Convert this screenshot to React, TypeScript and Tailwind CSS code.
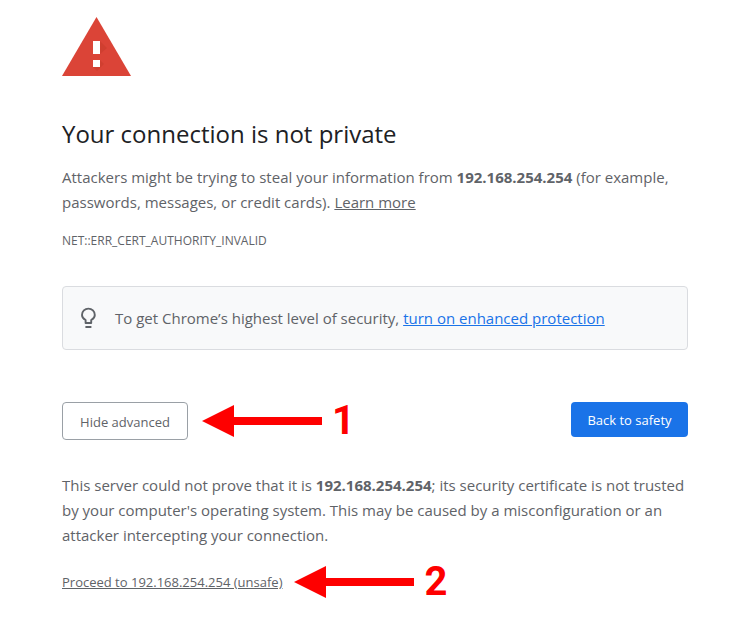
import React from "react";

function Arrow() {
  return (
    <svg className="h-8 w-[120px] shrink-0" viewBox="0 0 120 32" aria-hidden="true">
      <path d="M0 16 32 0v12h88v8H32v12z" fill="#fe0000" />
    </svg>
  );
}

function Step({ n }: { n: string }) {
  return (
    <span className="flex items-center gap-2.5">
      <Arrow />
      <span className="font-[Roboto,sans-serif] text-[40px] leading-8 font-bold text-[#fe0000]">{n}</span>
    </span>
  );
}

function Bulb() {
  return (
    <svg className="h-[22px] w-5 shrink-0" viewBox="0 0 20 22" fill="none" stroke="#5f6368" strokeWidth="1.9" aria-hidden="true">
      <path d="M6.600 16v-3C4.200 11.700 3 9.900 3 7.900a6.400 6.300 0 0 1 12.800 0c0 2-1.200 3.800-3.600 5.100v3z" strokeLinejoin="round" />
      <path d="M6.400 20h6" strokeWidth="2" />
    </svg>
  );
}

export default function App() {
  return (
    <main className="mx-auto max-w-[626px] bg-white pt-[17px] font-['Open_Sans','Noto_Sans',sans-serif] text-[15px] leading-[25px] text-[#5f6368]">
      <svg className="h-[59px] w-[69px]" viewBox="0 0 69 59" role="img" aria-label="Warning">
        <path d="M34.500 0 69 59H0z" fill="#db4437" />
        <path d="m38 24 7 7-7 6zM31 50l4 4 7-7-4-4z" fill="#c53929" fillOpacity=".5" />
        <path d="M31 24h7v13h-7zM31 43h7v7h-7z" fill="#fff" />
      </svg>
      <h1 className="mt-10 text-2xl leading-9 text-[#202124]">Your connection is not private</h1>
      <p className="mt-[13px]">
        Attackers might be trying to steal your information from <strong>192.168.254.254</strong> (for example, passwords, messages, or credit cards).{" "}
        <a href="#learn" className="underline">Learn more</a>
      </p>
      <p className="mt-[13px] text-xs leading-[25px]">NET::ERR_CERT_AUTHORITY_INVALID</p>
      <section className="mt-[33px] flex h-16 items-center gap-4 rounded border border-[#dadce0] bg-[#f8f9fa] px-4">
        <Bulb />
        <p>To get Chrome’s highest level of security, <a href="#protection" className="text-[#1a73e8] underline">turn on enhanced protection</a></p>
      </section>
      <div className="mt-[52px] flex items-start justify-between">
        <div className="flex items-center gap-3.5">
          <button type="button" className="h-[38px] w-[126px] rounded border border-[#9aa0a6] pt-0.5 text-[13px]">Hide advanced</button>
          <Step n="1" />
        </div>
        <button type="button" className="h-[35px] w-[117px] rounded bg-[#1a73e8] pt-0.5 text-[13px] text-white">Back to safety</button>
      </div>
      <p className="mt-[33px]">
        This server could not prove that it is <strong>192.168.254.254</strong>; its security certificate is not trusted by your computer's operating system. This may be caused by a misconfiguration or an attacker intercepting your connection.
      </p>
      <div className="mt-[18px] flex items-center gap-3">
        <a href="#proceed" className="text-[13px] underline">Proceed to 192.168.254.254 (unsafe)</a>
        <Step n="2" />
      </div>
    </main>
  );
}
